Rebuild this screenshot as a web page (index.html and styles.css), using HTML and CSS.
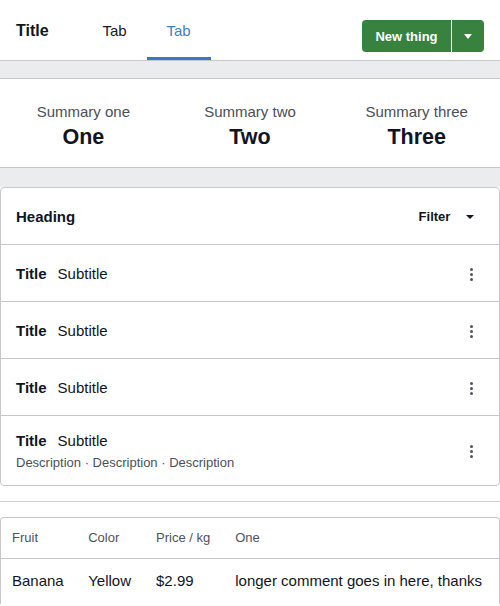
FILE: index.html
```html
<!DOCTYPE html>
<html>
<head>
<meta charset="utf-8">
<link rel="stylesheet" href="styles.css">
</head>
<body>
<header class="topbar">
  <div class="page-title">Title</div>
  <nav class="tabs">
    <a class="tab">Tab</a>
    <a class="tab tab-active">Tab</a>
  </nav>
  <div class="split-btn">
    <button class="btn-main">New thing</button>
    <button class="btn-drop"><span class="caret caret-white"></span></button>
  </div>
</header>
<div class="band"></div>
<section class="summary">
  <div class="sum-item"><div class="sum-label">Summary one</div><div class="sum-value">One</div></div>
  <div class="sum-item"><div class="sum-label">Summary two</div><div class="sum-value">Two</div></div>
  <div class="sum-item"><div class="sum-label">Summary three</div><div class="sum-value">Three</div></div>
</section>
<div class="band band2"></div>
<section class="card">
  <div class="card-head">
    <div class="card-heading">Heading</div>
    <div class="filter">Filter <span class="caret caret-dark"></span></div>
  </div>
  <div class="row">
    <div class="row-main"><div class="row-line"><span class="row-title">Title</span><span class="row-sub">Subtitle</span></div></div>
    <div class="kebab"><i></i><i></i><i></i></div>
  </div>
  <div class="row">
    <div class="row-main"><div class="row-line"><span class="row-title">Title</span><span class="row-sub">Subtitle</span></div></div>
    <div class="kebab"><i></i><i></i><i></i></div>
  </div>
  <div class="row">
    <div class="row-main"><div class="row-line"><span class="row-title">Title</span><span class="row-sub">Subtitle</span></div></div>
    <div class="kebab"><i></i><i></i><i></i></div>
  </div>
  <div class="row row-tall">
    <div class="row-main">
      <div class="row-line"><span class="row-title">Title</span><span class="row-sub">Subtitle</span></div>
      <div class="row-desc">Description · Description · Description</div>
    </div>
    <div class="kebab"><i></i><i></i><i></i></div>
  </div>
</section>
<hr class="divider">
<section class="card table-card">
  <table class="data">
    <thead>
      <tr><th>Fruit</th><th>Color</th><th>Price / kg</th><th class="col-wide">One</th></tr>
    </thead>
    <tbody>
      <tr><td>Banana</td><td>Yellow</td><td>$2.99</td><td>longer comment goes in here, thanks</td></tr>
    </tbody>
  </table>
</section>
</body>
</html>
```

FILE: styles.css
```css
* { box-sizing: border-box; }
html, body { margin: 0; padding: 0; background: #fff; }
body {
  font-family: "Liberation Sans", Arial, Helvetica, sans-serif;
  color: #111522;
  width: 500px;
  overflow: hidden;
}
.topbar {
  height: 60px;
  display: flex;
  align-items: stretch;
  padding: 0 16px;
}
.page-title {
  font-size: 16px;
  font-weight: bold;
  display: flex;
  align-items: center;
  padding-top: 1px;
  margin-right: 34px;
}
.tabs { display: flex; align-items: stretch; flex: 1; }
.tab {
  width: 64px;
  display: flex;
  align-items: center;
  justify-content: center;
  font-size: 15px;
  color: #151a26;
  border-bottom: 3px solid transparent;
  padding-top: 4px;
}
.tab-active { color: #3f7fc8; border-bottom-color: #3a78c4; }
.split-btn {
  align-self: flex-end;
  margin-bottom: 8px;
  display: flex;
  height: 32px;
}
.split-btn button {
  border: 0;
  background: #37823f;
  color: #fff;
  font-family: inherit;
  height: 32px;
  margin: 0;
  cursor: pointer;
}
.btn-main {
  font-size: 13px;
  font-weight: bold;
  padding: 0;
  width: 89px;
  white-space: nowrap;
  border-radius: 4px 0 0 4px;
}
.btn-drop {
  width: 32px;
  margin-left: 1px !important;
  border-radius: 0 4px 4px 0;
  display: flex;
  align-items: center;
  justify-content: center;
  padding: 0;
}
.caret {
  display: inline-block;
  width: 0; height: 0;
  border-left: 4.5px solid transparent;
  border-right: 4.5px solid transparent;
  border-top: 5px solid #fff;
}
.caret-dark { border-top-color: #111522; margin-left: 12px; vertical-align: 2px; border-left-width: 4px; border-right-width: 4px; border-top-width: 4.5px; }
.band {
  height: 19px;
  background: #ebecee;
  border-top: 1px solid #c6c7c9;
  border-bottom: 1px solid #c6c7c9;
}
.band2 { border-bottom: 0; height: 20px; }
.summary {
  display: grid;
  grid-template-columns: 1fr 1fr 1fr;
  padding: 23px 0 17px;
}
.sum-item { text-align: center; }
.sum-label { font-size: 15px; line-height: 20px; color: #4a4e59; }
.sum-value { font-size: 21.5px; line-height: 25px; font-weight: bold; margin-top: 3px; }
.card {
  border: 1px solid #c6c7c9;
  border-radius: 4px;
  background: #fff;
}
.card-head {
  height: 57px;
  display: flex;
  align-items: center;
  justify-content: space-between;
  padding: 1px 15px 0;
  border-bottom: 1px solid #c6c7c9;
}
.card-heading { font-size: 15px; font-weight: bold; }
.filter { font-size: 13px; font-weight: bold; margin-right: 10px; }
.row {
  display: flex;
  align-items: center;
  min-height: 57px;
  padding: 2px 15px 0;
  border-bottom: 1px solid #c6c7c9;
}
.row:last-child { border-bottom: 0; }
.row-tall { padding-top: 14px; padding-bottom: 13px; min-height: 69px; }
.row-main { flex: 1; }
.row-line { font-size: 15px; line-height: 20px; }
.row-title { font-weight: bold; margin-right: 11px; }
.row-desc { font-size: 13px; line-height: 16px; color: #4b5060; margin-top: 4px; }
.kebab {
  display: flex;
  flex-direction: column;
  gap: 2px;
  margin-right: 11px;
}
.kebab i { display: block; width: 3px; height: 3px; border-radius: 50%; background: #50545f; }
.divider {
  border: 0;
  border-top: 1px solid #d0d1d3;
  margin: 15px 0 15px;
  height: 0;
}
.table-card { border-bottom: 0; border-radius: 4px 4px 0 0; }
.data { border-collapse: collapse; white-space: nowrap; width: 100%; }
.data th {
  font-size: 13px;
  font-weight: normal;
  color: #4e525d;
  text-align: left;
  height: 40px;
  padding: 0 12px 1px 11px;
  border-bottom: 1px solid #c6c7c9;
}
.data th:not(:first-child), .data td:not(:first-child) { padding-left: 12.5px; padding-right: 12.5px; }
.data th.col-wide { width: 100%; }
.data td {
  font-size: 15px;
  text-align: left;
  padding: 0 12px 1px 11px;
  height: 46px;
}
```
